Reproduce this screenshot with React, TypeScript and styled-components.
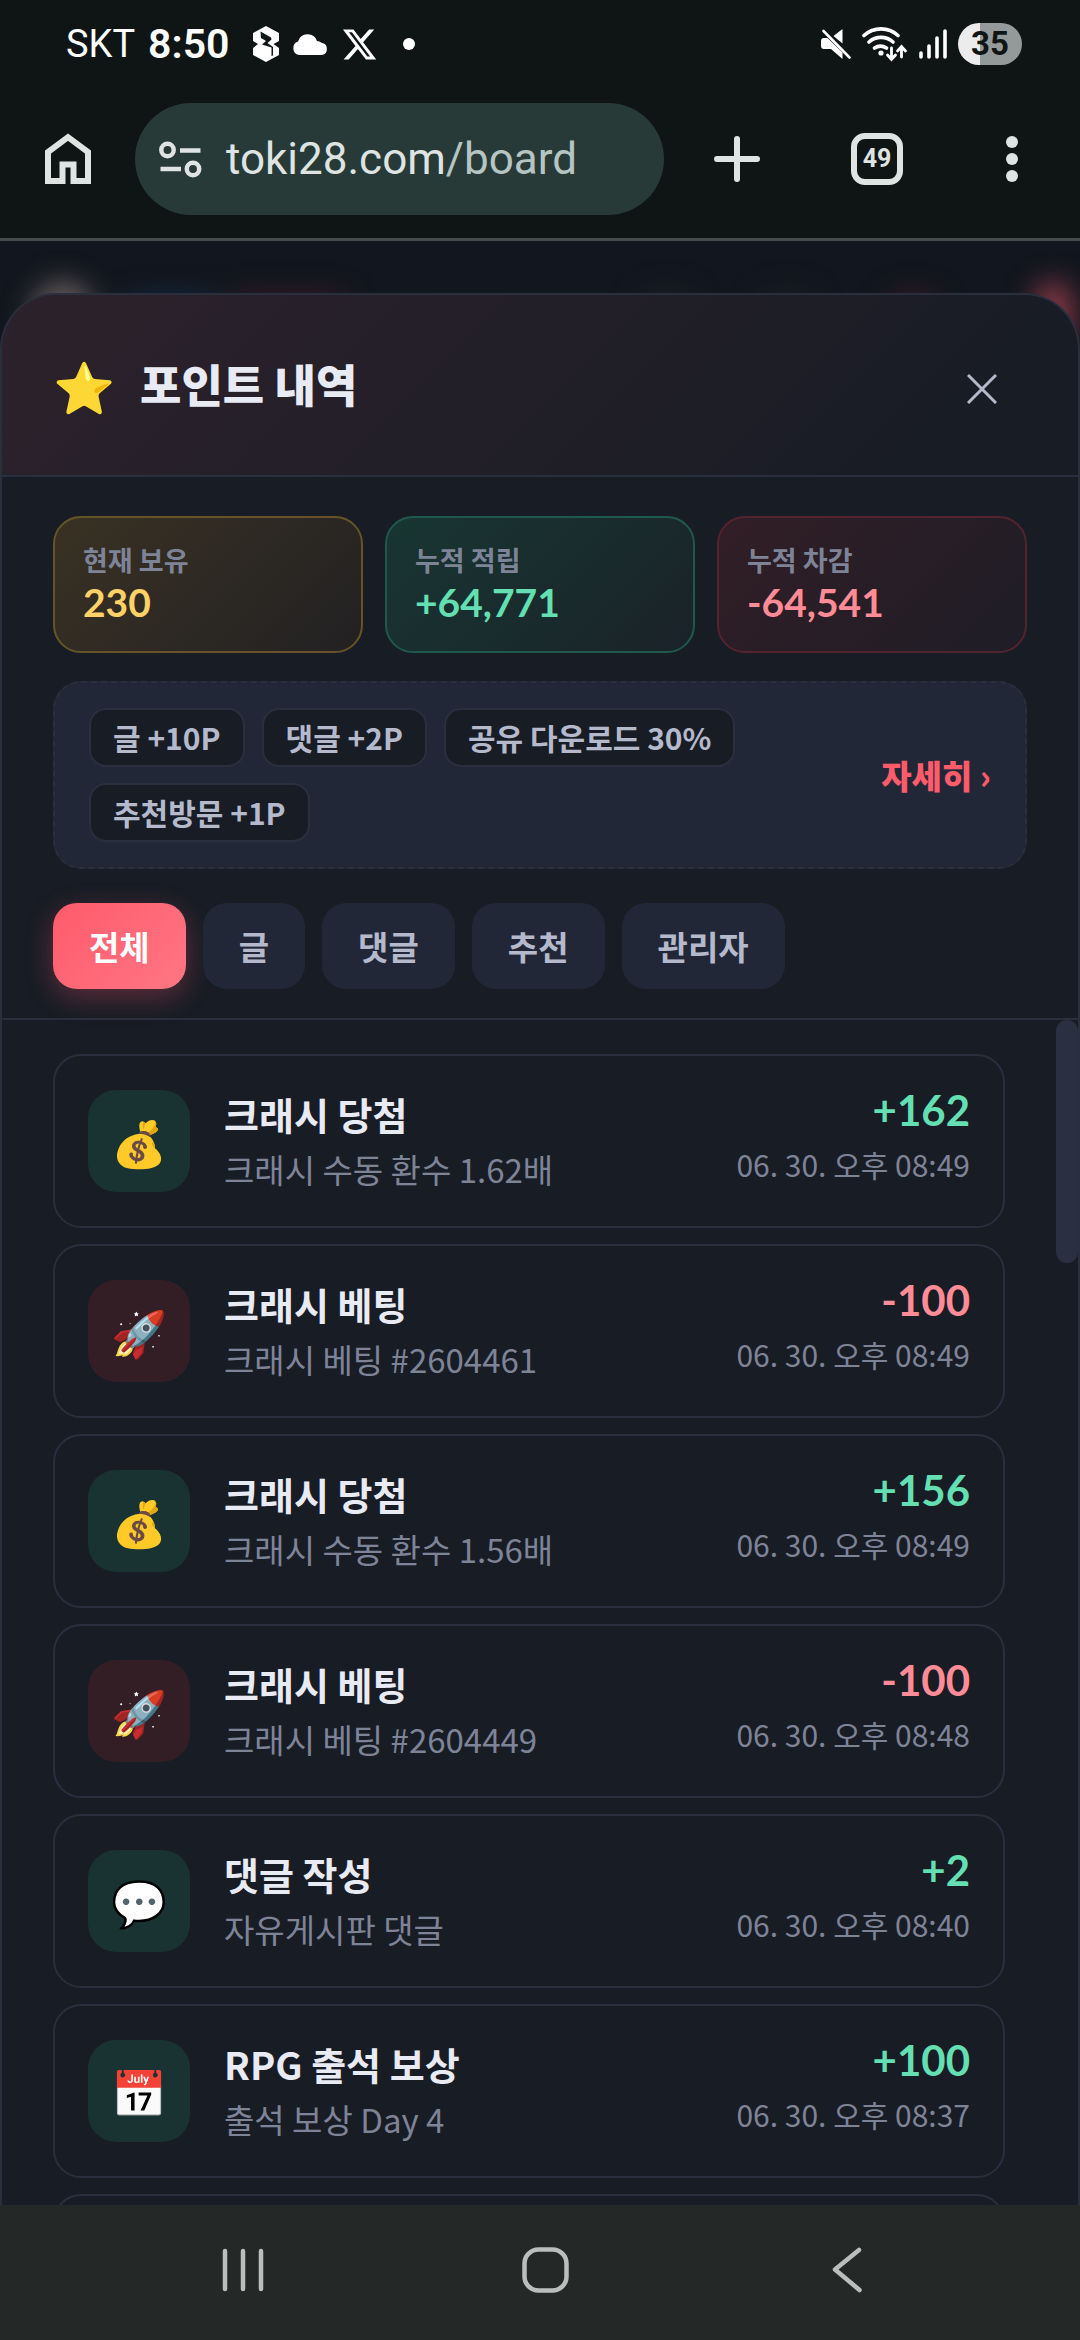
import React, { useState } from "react";
import styled, { createGlobalStyle, css } from "styled-components";
import { FaXTwitter } from "react-icons/fa6";

const GlobalStyle = createGlobalStyle`
  *, *::before, *::after { box-sizing: border-box; }
  html, body { margin: 0; padding: 0; background: #0f1414; }
  body { font-family: "Noto Sans CJK KR", "Noto Sans", sans-serif; }
  button { margin: 0; padding: 0; border: 0; background: none; color: inherit; font: inherit; cursor: pointer; }
  svg { display: block; flex: none; }
  h1, h2, p, ul, dl, dd { margin: 0; padding: 0; }
  ul { list-style: none; }
`;

const c = {
  chrome: "#0f1414",
  pill: "#273a38",
  icon: "#dfe4e3",
  sheet: "#181c25",
  raised: "#222737",
  line: "#2a2f3d",
  text: "#e8eaf4",
  soft: "#b4b9cb",
  muted: "#7e8498",
  gold: "#ffd166",
  green: "#63dfb1",
  red: "#ff8b97",
  accent: "#ff5b6b",
};

type Tone = "gold" | "green" | "red";

const Phone = styled.div`
  display: flex;
  flex-direction: column;
  height: 100vh;
  overflow: hidden;
  background: ${c.chrome};
`;

/* Status bar */

const StatusBar = styled.header`
  display: flex;
  align-items: center;
  justify-content: space-between;
  height: 88px;
  padding: 0 58px 0 66px;
  color: #fff;
  font-family: Roboto, sans-serif;
`;

const StatusGroup = styled.div<{ $gap: number }>`
  display: flex;
  align-items: center;
  gap: ${(p) => p.$gap}px;
`;

const Carrier = styled.span`
  font-size: 38px;
  line-height: 44px;
`;

const Clock = styled.time`
  margin-right: 10px;
  font-size: 41px;
  font-weight: 600;
  line-height: 44px;
`;

const MoreDot = styled.span`
  width: 12px;
  height: 12px;
  margin-left: 12px;
  border-radius: 50%;
  background: #fff;
`;

const Battery = styled.span`
  display: grid;
  place-items: center;
  width: 64px;
  height: 42px;
  border-radius: 21px;
  background: linear-gradient(90deg, #ececec 35%, #949a99 35%);
  color: #0f1414;
  font-size: 33px;
  font-weight: 700;
  line-height: 42px;
`;

/* Browser toolbar */

const Toolbar = styled.nav`
  display: flex;
  align-items: center;
  height: 153px;
  padding: 0 0 8px;
  border-bottom: 3px solid #434b4c;
  color: ${c.icon};
  font-family: Roboto, sans-serif;
`;

const ToolButton = styled.button<{ $width: number }>`
  display: grid;
  place-items: center;
  flex: none;
  width: ${(p) => p.$width}px;
  height: 112px;
`;

const AddressBar = styled.button`
  display: flex;
  flex: 1;
  align-items: center;
  gap: 24px;
  height: 112px;
  padding: 0 24px;
  border-radius: 56px;
  background: ${c.pill};
  font-size: 44px;
  line-height: 56px;
`;

const UrlPath = styled.span`
  color: #b5c5c1;
`;

const TabCount = styled.span`
  display: grid;
  place-items: center;
  width: 52px;
  height: 52px;
  border: 6px solid ${c.icon};
  border-radius: 14px;
  font-size: 25px;
  font-weight: 700;
  line-height: 40px;
`;

/* Page behind the sheet */

const Viewport = styled.main`
  display: grid;
  flex: 1;
  grid-template: minmax(0, 1fr) / minmax(0, 1fr);
  min-height: 0;
  overflow: hidden;
  background: #12161e;
`;

const BlurredHeader = styled.div`
  display: flex;
  grid-area: 1 / 1;
  align-items: center;
  height: 148px;
  padding: 0 8px 0 32px;
  filter: blur(14px);
`;

const Blob = styled.span<{ $width: number; $height: number; $color: string; $gap: number; $radius: number }>`
  width: ${(p) => p.$width}px;
  height: ${(p) => p.$height}px;
  margin-left: ${(p) => p.$gap}px;
  border-radius: ${(p) => p.$radius}px;
  background: ${(p) => p.$color};
`;

const Spacer = styled.span`
  flex: 1;
`;

/* Sheet */

const Sheet = styled.section`
  display: flex;
  grid-area: 1 / 1;
  flex-direction: column;
  min-height: 0;
  margin-top: 52px;
  overflow: hidden;
  border: 2px solid ${c.line};
  border-bottom: 0;
  border-radius: 56px 56px 0 0;
  background: ${c.sheet};
  z-index: 1;
`;

const SheetHeader = styled.div`
  display: flex;
  flex: none;
  align-items: center;
  justify-content: space-between;
  height: 182px;
  padding: 8px 51px 0;
  border-bottom: 2px solid ${c.line};
  background: linear-gradient(135deg, rgba(255, 91, 107, 0.09), rgba(255, 91, 107, 0) 90%);
`;

const SheetHeading = styled.div`
  display: flex;
  align-items: center;
  gap: 25px;
  padding-bottom: 10px;
`;

const SheetIcon = styled.span`
  font-size: 50px;
  line-height: 68px;
`;

const SheetTitle = styled.h1`
  color: ${c.text};
  font-size: 45px;
  font-weight: 900;
  line-height: 68px;
`;

const CloseButton = styled.button`
  display: grid;
  place-items: center;
  width: 90px;
  height: 90px;
  color: ${c.soft};
`;

const Summary = styled.div`
  display: flex;
  flex: none;
  flex-direction: column;
  padding: 39px 51px 29px;
  border-bottom: 2px solid ${c.line};
`;

const Stats = styled.dl`
  display: grid;
  grid-template-columns: repeat(3, 1fr);
  gap: 22px;
`;

const tones: Record<Tone, ReturnType<typeof css>> = {
  gold: css`
    border-color: #665428;
    background: linear-gradient(135deg, #393123, #222123);
  `,
  green: css`
    border-color: #1f594e;
    background: linear-gradient(135deg, #183632, #1a2229);
  `,
  red: css`
    border-color: #54242e;
    background: linear-gradient(135deg, #321e26, #1e1d26);
  `,
};

const Stat = styled.div<{ $tone: Tone }>`
  height: 137px;
  padding: 22px 28px;
  border: 2px solid;
  border-radius: 28px;
  ${(p) => tones[p.$tone]}
`;

const StatLabel = styled.dt`
  color: ${c.muted};
  font-size: 27px;
  font-weight: 700;
  line-height: 40px;
`;

const StatValue = styled.dd<{ $tone: Tone }>`
  color: ${(p) => c[p.$tone]};
  font-family: Lato, sans-serif;
  font-size: 39px;
  font-weight: 700;
  line-height: 44px;
`;

const Guide = styled.div`
  display: flex;
  align-items: center;
  justify-content: space-between;
  gap: 24px;
  margin-top: 28px;
  padding: 25px 34px;
  border: 2px dashed ${c.line};
  border-radius: 28px;
  background: ${c.raised};
`;

const Chips = styled.ul`
  display: flex;
  flex-wrap: wrap;
  gap: 16px 17px;
  max-width: 700px;
`;

const Chip = styled.li`
  padding: 0 22px;
  border: 2px solid ${c.line};
  border-radius: 17px;
  background: ${c.sheet};
  color: ${c.soft};
  font-size: 30px;
  font-weight: 700;
  line-height: 55px;
`;

const MoreLink = styled.a`
  flex: none;
  color: ${c.accent};
  font-size: 33px;
  font-weight: 900;
  line-height: 48px;
  text-decoration: none;
`;

const Filters = styled.div`
  display: flex;
  gap: 17px;
  margin-top: 34px;
`;

const Filter = styled.button<{ $active: boolean }>`
  height: 86px;
  padding: 0 36px;
  border-radius: 24px;
  background: ${(p) => (p.$active ? "linear-gradient(135deg, #ff5b6b, #ff7684)" : c.raised)};
  box-shadow: ${(p) => (p.$active ? "0 8px 28px rgba(255, 91, 107, 0.3)" : "none")};
  color: ${(p) => (p.$active ? "#fff" : c.soft)};
  font-size: 33px;
  font-weight: 700;
  line-height: 48px;
`;

const ListArea = styled.div`
  display: flex;
  flex: 1;
  min-height: 0;
  overflow: hidden;
`;

const Entries = styled.ul`
  display: flex;
  flex: 1;
  flex-direction: column;
  gap: 16px;
  padding: 34px 51px;
`;

const ScrollTrack = styled.div`
  width: 22px;
`;

const ScrollThumb = styled.div`
  height: 243px;
  border-radius: 11px;
  background: #2a3042;
`;

const Entry = styled.li`
  display: flex;
  flex: none;
  align-items: center;
  gap: 34px;
  height: 174px;
  padding: 0 33px;
  border: 2px solid ${c.line};
  border-radius: 28px;
`;

const Tile = styled.span<{ $gain: boolean }>`
  display: grid;
  place-items: center;
  flex: none;
  width: 102px;
  height: 102px;
  border-radius: 28px;
  background: ${(p) => (p.$gain ? "#193333" : "#331e26")};
  font-size: 45px;
  line-height: 68px;
`;

const EntryText = styled.div`
  display: flex;
  flex: 1;
  flex-direction: column;
`;

const EntryTitle = styled.h2`
  color: ${c.text};
  font-size: 38px;
  font-weight: 700;
  line-height: 56px;
`;

const EntryNote = styled.p`
  color: ${c.muted};
  font-size: 33px;
  line-height: 54px;
`;

const EntryMeta = styled.div`
  display: flex;
  flex-direction: column;
  align-items: flex-end;
  padding-bottom: 8px;
`;

const Amount = styled.strong<{ $gain: boolean }>`
  color: ${(p) => (p.$gain ? c.green : c.red)};
  font-family: Lato, sans-serif;
  font-size: 42px;
  font-weight: 700;
  line-height: 54px;
`;

const EntryTime = styled.time`
  color: ${c.muted};
  font-size: 30px;
  line-height: 54px;
`;

/* System navigation */

const SystemNav = styled.nav`
  display: grid;
  flex: none;
  grid-template-columns: repeat(3, 1fr);
  height: 135px;
  padding: 0 82px 6px 92px;
  background: #242928;
  color: #bbbebd;
`;

const SystemButton = styled.button`
  display: grid;
  place-items: center;
`;

/* Icons */

const NotifyIcon = () => (
  <svg width="26" height="36" viewBox="0 0 26 36" fill="#fff" fillRule="evenodd">
    <path d="M13 0 26 7v8l-5.500 3 5.500 4v7l-13 7-13-7v-7l5-4-5-3V7zM7.500 5.500 8 12l5 3-4 3.500 9.500 3V30l1.500-.5V21l-5.500-4 4-3.500-.5-2z" />
  </svg>
);

const CloudIcon = () => (
  <svg width="36" height="21" viewBox="0 0 36 21" fill="#fff">
    <path d="M7 21a7 7 0 0 1-1-13.500A10 10 0 0 1 25 7a7 7 0 0 1 4.500 1.800A6.200 6.200 0 0 1 30 21z" />
  </svg>
);

const MuteIcon = () => (
  <svg width="30" height="32" viewBox="0 0 30 32" fill="#fff">
    <path d="M21.500 1v14.500L12.500 8zM3 10h3.500L21.500 24.500V31L10 21H3a3 3 0 0 1-3-3v-5a3 3 0 0 1 3-3z" />
    <path d="m2.500 3 26 26.500" fill="none" stroke="#fff" strokeWidth="2.600" strokeLinecap="round" />
  </svg>
);

const WifiIcon = () => (
  <svg width="46" height="36" viewBox="0 0 46 36" fill="none" stroke="#fff" strokeWidth="3.600" strokeLinecap="round">
    <path d="M2 9.500a25 25 0 0 1 34 0M7 16a18 18 0 0 1 24 0M12.500 22a11 11 0 0 1 12 0" />
    <circle cx="19" cy="27" r="2.600" fill="#fff" stroke="none" />
    <path d="M29.500 22v11m-4-4 4 4.500 4-4.500M39.500 31V20.500m-4 4.500 4-4.500 4 4.500" strokeWidth="2.800" />
  </svg>
);

const SignalIcon = () => (
  <svg width="28" height="32" viewBox="0 0 28 32" stroke="#fff" strokeWidth="3.600" strokeLinecap="round">
    <path d="M2 25v4M10 18v11M18 10v19M26 3v26" />
  </svg>
);

const HomeIcon = () => (
  <svg width="46" height="52" viewBox="0 0 46 52" fill="none" stroke="currentColor" strokeWidth="6">
    <path d="M3 19v29h14.500V31.500h11V48H43V19L23 4.200z" />
  </svg>
);

const TuneIcon = () => (
  <svg width="43" height="37" viewBox="0 0 43 37" fill="none" stroke="currentColor" strokeWidth="4.500">
    <circle cx="8.500" cy="9" r="6.200" />
    <path d="M21 9.500h20.500M1.500 28H22" />
    <circle cx="34" cy="28" r="6.200" />
  </svg>
);

const PlusIcon = () => (
  <svg width="46" height="46" viewBox="0 0 46 46" stroke="currentColor" strokeWidth="6" strokeLinecap="round">
    <path d="M23 3v40M3 23h40" />
  </svg>
);

const MenuIcon = () => (
  <svg width="12" height="46" viewBox="0 0 12 46" fill="currentColor">
    <circle cx="6" cy="6" r="6" />
    <circle cx="6" cy="23" r="6" />
    <circle cx="6" cy="40" r="6" />
  </svg>
);

const CloseIcon = () => (
  <svg width="30" height="30" viewBox="0 0 30 30" stroke="currentColor" strokeWidth="3">
    <path d="m1 1 28 28M29 1 1 29" />
  </svg>
);

const RecentsIcon = () => (
  <svg width="42" height="44" viewBox="0 0 42 44" stroke="currentColor" strokeWidth="4.500" strokeLinecap="round">
    <path d="M3 3v38M21 3v38M39 3v38" />
  </svg>
);

const SquareIcon = () => (
  <svg width="47" height="46" viewBox="0 0 47 46" fill="none" stroke="currentColor" strokeWidth="4.500">
    <rect x="2.500" y="2.500" width="42" height="41" rx="14" />
  </svg>
);

const BackIcon = () => (
  <svg width="30" height="46" viewBox="0 0 30 46" fill="none" stroke="currentColor" strokeWidth="4.500" strokeLinecap="round" strokeLinejoin="round">
    <path d="M27 3 3 22.500 27.500 43" />
  </svg>
);

/* Data */

const stats: { label: string; value: string; tone: Tone }[] = [
  { label: "현재 보유", value: "230", tone: "gold" },
  { label: "누적 적립", value: "+64,771", tone: "green" },
  { label: "누적 차감", value: "-64,541", tone: "red" },
];

const chips = ["글 +10P", "댓글 +2P", "공유 다운로드 30%", "추천방문 +1P"];
const filters = ["전체", "글", "댓글", "추천", "관리자"];

const entries = [
  { icon: "💰", title: "크래시 당첨", note: "크래시 수동 환수 1.62배", amount: 162, time: "06. 30. 오후 08:49" },
  { icon: "🚀", title: "크래시 베팅", note: "크래시 베팅 #2604461", amount: -100, time: "06. 30. 오후 08:49" },
  { icon: "💰", title: "크래시 당첨", note: "크래시 수동 환수 1.56배", amount: 156, time: "06. 30. 오후 08:49" },
  { icon: "🚀", title: "크래시 베팅", note: "크래시 베팅 #2604449", amount: -100, time: "06. 30. 오후 08:48" },
  { icon: "💬", title: "댓글 작성", note: "자유게시판 댓글", amount: 2, time: "06. 30. 오후 08:40" },
  { icon: "📅", title: "RPG 출석 보상", note: "출석 보상 Day 4", amount: 100, time: "06. 30. 오후 08:37" },
];

export default function App() {
  const [filter, setFilter] = useState(filters[0]);

  return (
    <Phone>
      <GlobalStyle />
      <StatusBar>
        <StatusGroup $gap={13}>
          <Carrier>SKT</Carrier>
          <Clock>8:50</Clock>
          <NotifyIcon />
          <CloudIcon />
          <FaXTwitter size={37} />
          <MoreDot />
        </StatusGroup>
        <StatusGroup $gap={11}>
          <MuteIcon />
          <WifiIcon />
          <SignalIcon />
          <Battery>35</Battery>
        </StatusGroup>
      </StatusBar>

      <Toolbar>
        <ToolButton $width={135} aria-label="홈"><HomeIcon /></ToolButton>
        <AddressBar>
          <TuneIcon />
          <span>toki28.com<UrlPath>/board</UrlPath></span>
        </AddressBar>
        <ToolButton $width={146} aria-label="새 탭"><PlusIcon /></ToolButton>
        <ToolButton $width={134} aria-label="탭 목록"><TabCount>49</TabCount></ToolButton>
        <ToolButton $width={136} aria-label="메뉴"><MenuIcon /></ToolButton>
      </Toolbar>

      <Viewport>
        <BlurredHeader aria-hidden="true">
          <Blob $width={62} $height={66} $radius={31} $gap={0} $color="#6a605e" />
          <Blob $width={92} $height={36} $radius={8} $gap={32} $color="#142c46" />
          <Blob $width={116} $height={40} $radius={8} $gap={12} $color="#3a1a24" />
          <Spacer />
          <Blob $width={60} $height={48} $radius={24} $gap={0} $color="#1c2028" />
          <Blob $width={60} $height={48} $radius={24} $gap={60} $color="#1a1e26" />
          <Blob $width={54} $height={44} $radius={22} $gap={70} $color="#3a1a22" />
          <Blob $width={38} $height={66} $radius={19} $gap={94} $color="#8a3a46" />
        </BlurredHeader>

        <Sheet>
          <SheetHeader>
            <SheetHeading>
              <SheetIcon>⭐</SheetIcon>
              <SheetTitle>포인트 내역</SheetTitle>
            </SheetHeading>
            <CloseButton aria-label="닫기"><CloseIcon /></CloseButton>
          </SheetHeader>

          <Summary>
            <Stats>
              {stats.map((s) => (
                <Stat key={s.label} $tone={s.tone}>
                  <StatLabel>{s.label}</StatLabel>
                  <StatValue $tone={s.tone}>{s.value}</StatValue>
                </Stat>
              ))}
            </Stats>
            <Guide>
              <Chips>
                {chips.map((chip) => <Chip key={chip}>{chip}</Chip>)}
              </Chips>
              <MoreLink href="#guide">자세히 ›</MoreLink>
            </Guide>
            <Filters>
              {filters.map((name) => (
                <Filter key={name} $active={name === filter} aria-pressed={name === filter} onClick={() => setFilter(name)}>
                  {name}
                </Filter>
              ))}
            </Filters>
          </Summary>

          <ListArea>
            <Entries>
              {entries.map((e, i) => (
                <Entry key={i}>
                  <Tile $gain={e.amount > 0}>{e.icon}</Tile>
                  <EntryText>
                    <EntryTitle>{e.title}</EntryTitle>
                    <EntryNote>{e.note}</EntryNote>
                  </EntryText>
                  <EntryMeta>
                    <Amount $gain={e.amount > 0}>{e.amount > 0 ? `+${e.amount}` : e.amount}</Amount>
                    <EntryTime>{e.time}</EntryTime>
                  </EntryMeta>
                </Entry>
              ))}
              <Entry />
            </Entries>
            <ScrollTrack><ScrollThumb /></ScrollTrack>
          </ListArea>
        </Sheet>
      </Viewport>

      <SystemNav>
        <SystemButton aria-label="최근 앱"><RecentsIcon /></SystemButton>
        <SystemButton aria-label="홈 화면"><SquareIcon /></SystemButton>
        <SystemButton aria-label="뒤로"><BackIcon /></SystemButton>
      </SystemNav>
    </Phone>
  );
}
